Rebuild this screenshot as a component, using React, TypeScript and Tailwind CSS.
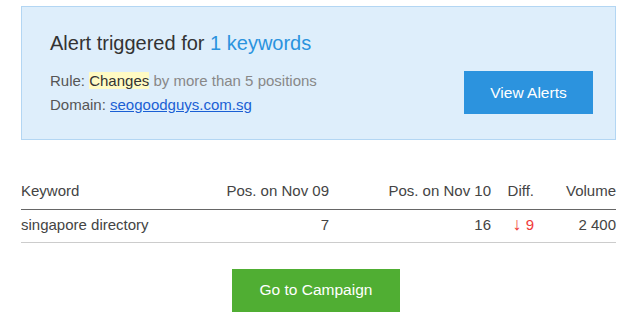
import React from "react";

export default function App() {
  return (
    <div className="w-[632px] h-[326px] bg-white pl-[21px] pr-[16px] pt-[6px]" style={{ fontFamily: '"Liberation Sans", Arial, sans-serif' }}>
      <div className="h-[134px] border border-[#b3d6f3] bg-[#deeefb] pl-[28px] pr-[22px] pt-[23px] flex justify-between">
        <div>
          <div className="text-[20px] leading-[26px] text-[#333]">
            Alert triggered for <span className="text-[#2a93de]">1 keywords</span>
          </div>
          <div className="mt-[13px] text-[15px] leading-[24px] text-[#555]">
            Rule: <span className="bg-[#fffbc4] text-[#333]">Changes</span>{" "}
            <span className="text-[#888]">by more than 5 positions</span>
          </div>
          <div className="text-[15px] leading-[24px] text-[#555]">
            Domain: <a href="#" className="text-[#1a5fd4] underline">seogoodguys.com.sg</a>
          </div>
        </div>
        <div className="pt-[41px]">
          <button className="w-[129px] h-[43px] bg-[#2c93de] text-white text-[15.5px]">View Alerts</button>
        </div>
      </div>
      <table className="mt-[35px] w-full text-[15px] text-[#444] border-collapse">
        <thead>
          <tr className="border-b border-[#666]">
            <th className="text-left font-normal h-[34px] pb-[2px] w-[180px]">Keyword</th>
            <th className="text-right font-normal pb-[2px] w-[128px]">Pos. on Nov 09</th>
            <th className="text-right font-normal pb-[2px] w-[162px]">Pos. on Nov 10</th>
            <th className="text-right font-normal pb-[2px] w-[43px]">Diff.</th>
            <th className="text-right font-normal pb-[2px]">Volume</th>
          </tr>
        </thead>
        <tbody>
          <tr className="border-b border-[#ccc]">
            <td className="text-left h-[33px]">singapore directory</td>
            <td className="text-right">7</td>
            <td className="text-right">16</td>
            <td className="text-right text-[#f03a3a]">
              <span className="text-[18px] leading-none">↓</span> 9
            </td>
            <td className="text-right">2 400</td>
          </tr>
        </tbody>
      </table>
      <div className="mt-[26px] flex justify-center pr-[5px]">
        <button className="w-[168px] h-[43px] bg-[#50ae33] text-white text-[15.5px]">Go to Campaign</button>
      </div>
    </div>
  );
}
